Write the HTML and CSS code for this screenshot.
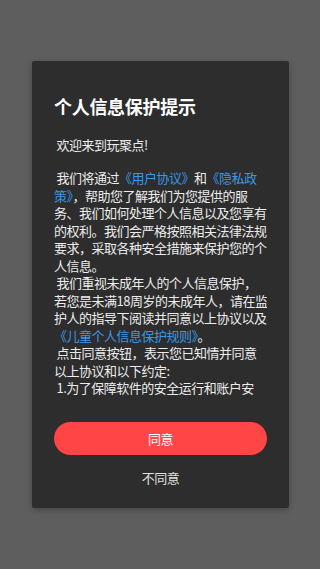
FILE: index.html
```html
<!DOCTYPE html>
<html lang="zh-CN">
<head>
    <meta charset="UTF-8">
    <meta name="viewport" content="width=device-width, initial-scale=1.0">
    <title>个人信息保护提示</title>
    <link rel="stylesheet" href="styles.css">
</head>
<body>
    <div class="dialog">
        <h1 class="title">个人信息保护提示</h1>

        <div class="content">
            <p class="welcome">&nbsp;欢迎来到玩聚点!</p>
            <p>&nbsp;我们将通过<a href="#">《用户协议》</a>和<a href="#">《隐私政<br>策》</a>，帮助您了解我们为您提供的服<br>务、我们如何处理个人信息以及您享有<br>的权利。我们会严格按照相关法律法规<br>要求，采取各种安全措施来保护您的个<br>人信息。</p>
            <p>&nbsp;我们重视未成年人的个人信息保护，<br>若您是未满18周岁的未成年人，请在监<br>护人的指导下阅读并同意以上协议以及<br><a href="#">《儿童个人信息保护规则》</a>。</p>
            <p>&nbsp;点击同意按钮，表示您已知情并同意<br>以上协议和以下约定:</p>
            <p>&nbsp;1.为了保障软件的安全运行和账户安</p>
        </div>

        <button class="btn-agree">同意</button>
        <button class="btn-refuse">不同意</button>
    </div>
</body>
</html>
```

FILE: styles.css
```css
body {
    margin: 0;
    padding: 61px 0 0 32px;
    height: 569px;
    box-sizing: border-box;
    background: #5e5e5e;
    font-family: "Noto Sans CJK SC", "Noto Sans", sans-serif;
    overflow: hidden;
}
.dialog {
    width: 257px;
    height: 447px;
    box-sizing: border-box;
    padding: 33px 22px 0;
    background: #2d2d2d;
    border-radius: 2px;
    box-shadow: 0 2px 6px rgba(0, 0, 0, 0.25);
    display: flex;
    flex-direction: column;
}
.title {
    margin: 0 0 18px;
    font-size: 18px;
    line-height: 24px;
    letter-spacing: -0.3px;
    font-weight: bold;
    color: #fff;
}
.content {
    height: 260px;
    overflow: hidden;
    white-space: nowrap;
    font-size: 13px;
    line-height: 17.5px;
    letter-spacing: -0.5px;
    color: #ececec;
}
.content p {
    margin: 0;
}
.content .welcome {
    margin-bottom: 15.5px;
}
.content a {
    color: #3a98e6;
    text-decoration: none;
}
.btn-agree {
    margin-top: 26px;
    height: 33px;
    border: none;
    border-radius: 17px;
    background: #ff4545;
    color: #fff;
    font-family: inherit;
    font-size: 13px;
    letter-spacing: -0.5px;
    padding: 0;
}
.btn-refuse {
    margin-top: 12px;
    height: 20px;
    border: none;
    background: none;
    color: #e0e0e0;
    font-family: inherit;
    font-size: 13px;
    letter-spacing: -0.5px;
    padding: 0;
}
```
